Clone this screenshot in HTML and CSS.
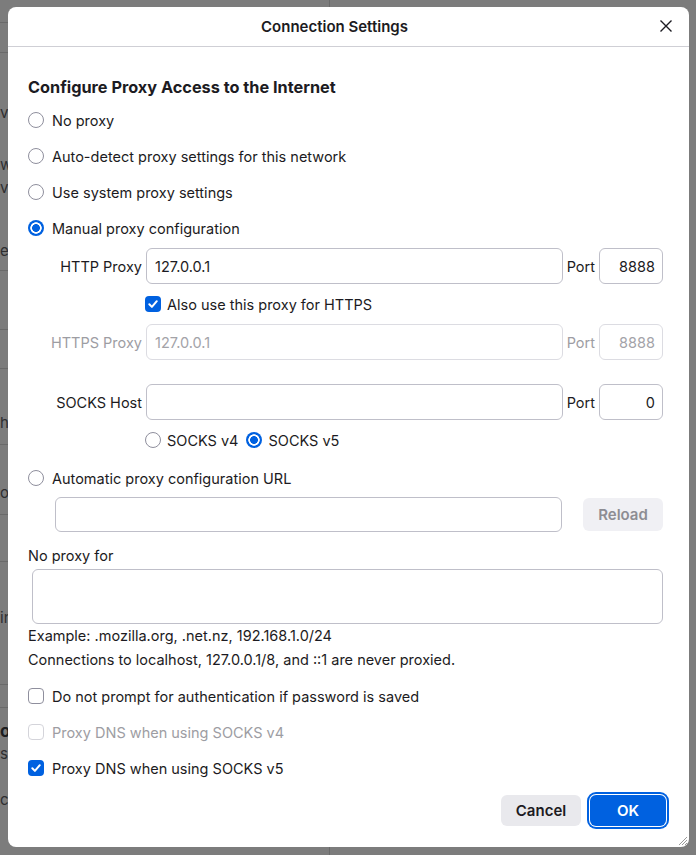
FILE: index.html
```html
<!DOCTYPE html>
<html lang="en">
<head>
    <meta charset="UTF-8">
    <title>Connection Settings</title>
    <link rel="stylesheet" href="styles.css">
</head>
<body>
<div class="page">
    <div class="side">
        <div class="srow h23 line"></div>
        <div class="srow h30 line"></div>
        <div class="srow h48"></div>
        <div class="srow h22"><span class="frag">ve</span></div>
        <div class="srow h30"></div>
        <div class="srow h22"><span class="frag">w</span></div>
        <div class="srow h24"><span class="frag">va</span></div>
        <div class="srow h40"></div>
        <div class="srow h22"><span class="frag">ec</span></div>
        <div class="srow h10 line"></div>
        <div class="srow h59 line"></div>
        <div class="srow h39 line"></div>
        <div class="srow h42"></div>
        <div class="srow h22"><span class="frag">he</span></div>
        <div class="srow h12 line"></div>
        <div class="srow h36"></div>
        <div class="srow h22"><span class="frag">or</span></div>
        <div class="srow h12 line"></div>
        <div class="srow h47 line"></div>
        <div class="srow h44"></div>
        <div class="srow h22"><span class="frag">in</span></div>
        <div class="srow h57 line"></div>
        <div class="srow h23 line"></div>
        <div class="srow h12"></div>
        <div class="srow h22"><span class="frag bold">ou</span></div>
        <div class="srow h22"><span class="frag">s</span></div>
        <div class="srow h24"></div>
        <div class="srow h22"><span class="frag">co</span></div>
    </div>
</div>

<div class="dialog">
    <div class="dlg-head">
        <span class="dlg-title">Connection Settings</span>
        <svg class="close" width="12" height="12" viewBox="0 0 12 12">
            <path d="M0.5 0.5 L11.5 11.5 M11.5 0.5 L0.5 11.5" stroke="#1c1b22" stroke-width="1.4" fill="none"/>
        </svg>
    </div>

    <div class="dlg-body">
        <h2 class="heading">Configure Proxy Access to the Internet</h2>

        <div class="opt"><span class="radio"></span>No proxy</div>
        <div class="opt"><span class="radio"></span>Auto-detect proxy settings for this network</div>
        <div class="opt"><span class="radio"></span>Use system proxy settings</div>
        <div class="opt"><span class="radio on"></span>Manual proxy configuration</div>

        <div class="manual">
            <label class="lbl">HTTP Proxy</label>
            <div class="field">127.0.0.1</div>
            <label class="port">Port</label>
            <div class="field num">8888</div>

            <div class="subrow">
                <span class="check on">
                    <svg width="12" height="12" viewBox="0 0 12 12"><path d="M2.3 6.3 L4.9 8.9 L9.8 3.2" stroke="#fff" stroke-width="2" fill="none" stroke-linecap="round" stroke-linejoin="round"/></svg>
                </span>
                Also use this proxy for HTTPS
            </div>

            <label class="lbl dis">HTTPS Proxy</label>
            <div class="field dis">127.0.0.1</div>
            <label class="port dis">Port</label>
            <div class="field num dis">8888</div>

            <div class="spacer"></div>

            <label class="lbl">SOCKS Host</label>
            <div class="field"></div>
            <label class="port">Port</label>
            <div class="field num">0</div>

            <div class="subrow">
                <span class="radio"></span>SOCKS v4
                <span class="radio on v5"></span>SOCKS v5
            </div>
        </div>

        <div class="opt"><span class="radio"></span>Automatic proxy configuration URL</div>
        <div class="urlrow">
            <div class="field url"></div>
            <button class="btn reload">Reload</button>
        </div>

        <div class="noproxy">No proxy for</div>
        <div class="area"></div>
        <div class="note">Example: .mozilla.org, .net.nz, 192.168.1.0/24</div>
        <div class="note">Connections to localhost, 127.0.0.1/8, and ::1 are never proxied.</div>

        <div class="checks">
            <div class="opt"><span class="check"></span>Do not prompt for authentication if password is saved</div>
            <div class="opt dis"><span class="check dis"></span>Proxy DNS when using SOCKS v4</div>
            <div class="opt">
                <span class="check on">
                    <svg width="12" height="12" viewBox="0 0 12 12"><path d="M2.3 6.3 L4.9 8.9 L9.8 3.2" stroke="#fff" stroke-width="2" fill="none" stroke-linecap="round" stroke-linejoin="round"/></svg>
                </span>
                Proxy DNS when using SOCKS v5
            </div>
        </div>

        <div class="footer">
            <button class="btn cancel">Cancel</button>
            <button class="btn ok">OK</button>
        </div>
    </div>

    <svg class="grip" width="11" height="11" viewBox="0 0 11 11">
        <path d="M10 2 L2 10 M10 5 L5 10 M10 8 L8 10" stroke="#9a9a9a" stroke-width="1" fill="none"/>
    </svg>
</div>
</body>
</html>
```

FILE: styles.css
```css
html, body{
    margin:0;
    padding:0;
}
body{
    width:696px;
    height:855px;
    background:#7c7c7c;
    font-family:Inter, "Liberation Sans", Arial, sans-serif;
    font-size:14.5px;
    color:#1c1b22;
    position:relative;
    overflow:hidden;
}

/* page behind the overlay */
.page{
    display:flex;
    height:855px;
}
.side{
    width:329px;
    border-right:1px solid #6a6a6a;
    display:flex;
    flex-direction:column;
}
.srow{
    flex:none;
    display:flex;
    align-items:center;
}
.srow.line{
    border-bottom:1px solid #6a6a6a;
    box-sizing:border-box;
}
.frag{
    white-space:nowrap;
    color:#2e2e30;
    font-size:15px;
}
.frag.bold{
    font-weight:bold;
    font-size:17px;
    color:#1e1e20;
}
.h10{height:10px;}
.h12{height:12px;}
.h22{height:22px;}
.h23{height:23px;}
.h24{height:24px;}
.h30{height:30px;}
.h36{height:36px;}
.h39{height:39px;}
.h40{height:40px;}
.h42{height:42px;}
.h44{height:44px;}
.h47{height:47px;}
.h48{height:48px;}
.h57{height:57px;}
.h59{height:59px;}

/* dialog */
.dialog{
    position:absolute;
    left:8px;
    top:7px;
    width:681px;
    height:840px;
    background:#fff;
    border-radius:8px;
    box-sizing:border-box;
}
.dlg-head{
    height:40px;
    border-bottom:1px solid #cfcfd5;
    box-sizing:border-box;
    display:flex;
    align-items:center;
    justify-content:center;
    padding-right:28px;
    position:relative;
}
.dlg-title{
    font-weight:600;
    font-size:15px;
}
.close{
    position:absolute;
    right:17px;
    top:13px;
}
.dlg-body{
    padding:0 26px 0 20px;
}
.heading{
    margin:30px 0 5px 0;
    font-size:16.3px;
    line-height:20px;
    height:20px;
    font-weight:700;
}

.opt{
    height:36px;
    display:flex;
    align-items:center;
    gap:8px;
}
.opt.dis{
    color:#9d9da3;
}

.radio{
    width:16px;
    height:16px;
    box-sizing:border-box;
    border:1px solid #8f8f9d;
    border-radius:50%;
    background:#fff;
    flex:none;
}
.radio.on{
    border:none;
    background:radial-gradient(circle, #0061e0 0 3.6px, #fff 4.2px 5.4px, #0061e0 6px);
}

.check{
    width:16px;
    height:16px;
    box-sizing:border-box;
    border:1px solid #8f8f9d;
    border-radius:4px;
    background:#fff;
    flex:none;
    display:flex;
    align-items:center;
    justify-content:center;
}
.check.on{
    border:none;
    background:#0061e0;
}
.check.dis{
    border-color:#d4d4da;
}

/* manual proxy grid */
.manual{
    margin-top:2px;
    display:grid;
    grid-template-columns:114px 1fr auto 64px;
    grid-template-rows:36px 40px 36px 24px 36px 40px;
    column-gap:4px;
    align-items:center;
}
.lbl{
    text-align:right;
}
.lbl.dis, .port.dis{
    color:#9d9da3;
}
.field{
    height:36px;
    box-sizing:border-box;
    border:1px solid #bfbfc9;
    border-radius:6px;
    padding:0 8px;
    display:flex;
    align-items:center;
}
.field.num{
    justify-content:flex-end;
    padding-right:7px;
}
.field.dis{
    border-color:#dcdce2;
    color:#a3a3a8;
}
.subrow{
    grid-column:2 / 5;
    display:flex;
    align-items:center;
    gap:6px;
    margin-left:-1px;
}
.spacer{
    grid-column:1 / 5;
}
.radio.v5{
    margin-left:2px;
}

.urlrow{
    display:flex;
    align-items:center;
    margin:1px 0 0 27px;
    gap:21px;
}
.field.url{
    flex:1;
    height:35px;
}
.btn{
    font-family:Inter, "Liberation Sans", Arial, sans-serif;
    font-size:15px;
    font-weight:600;
    border:none;
    border-radius:6px;
    padding:0;
}
.reload{
    width:80px;
    height:33px;
    background:#f0f0f4;
    color:#8d8d93;
}

.noproxy{
    margin-top:14px;
    line-height:20px;
}
.area{
    margin:3px 0 0 4px;
    height:55px;
    box-sizing:border-box;
    border:1px solid #bfbfc9;
    border-radius:6px;
}
.note{
    line-height:24px;
}
.checks{
    margin-top:6px;
}

.footer{
    margin-top:9px;
    display:flex;
    justify-content:flex-end;
    align-items:center;
    gap:9px;
    margin-right:-3px;
}
.cancel{
    width:80px;
    height:31px;
    background:#e9e9ed;
    color:#1c1b22;
}
.ok{
    width:76px;
    height:31px;
    background:#0061e0;
    color:#fff;
    box-shadow:0 0 0 1px #fff, 0 0 0 3px #0061e0;
}
.grip{
    position:absolute;
    right:1px;
    bottom:1px;
}
```
